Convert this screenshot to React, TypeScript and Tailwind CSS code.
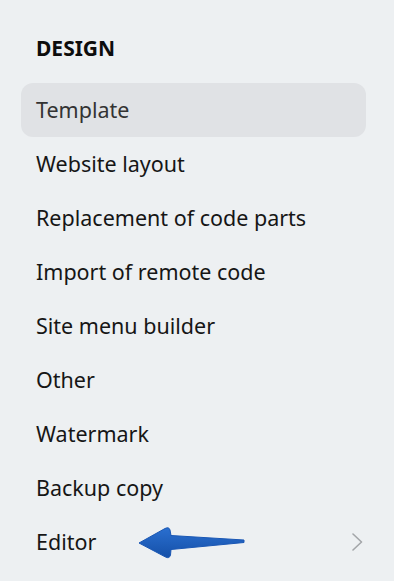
const items = [
  "Template",
  "Website layout",
  "Replacement of code parts",
  "Import of remote code",
  "Site menu builder",
  "Other",
  "Watermark",
  "Backup copy",
  "Editor",
]

function Arrow() {
  return (
    <svg width="112" height="36" viewBox="134 522 112 36" className="shrink-0">
      <defs>
        <linearGradient id="arw" x1="0" y1="0" x2="0" y2="1">
          <stop offset="0" stopColor="#2a6fd0" />
          <stop offset="1" stopColor="#1550a8" />
        </linearGradient>
      </defs>
      <path
        d="M139 540 L165 525.5 Q169 523.5 170 527 L171 532.5 L244 537 L244 539.5 L171 546.5 L170.5 552 Q169.5 556 165.5 554 Z"
        fill="url(#arw)"
        stroke="#1a57b4"
        strokeWidth="1"
        strokeLinejoin="round"
      />
    </svg>
  )
}

function Chevron() {
  return (
    <svg width="12" height="18" viewBox="0 0 12 18" className="ml-auto mr-[-12px] shrink-0">
      <polyline points="2,1 10.5,9 2,17" fill="none" stroke="#a3a6a9" strokeWidth="1.6" strokeLinecap="round" strokeLinejoin="round" />
    </svg>
  )
}

export default function App() {
  return (
    <div
      className="w-[394px] h-[581px] bg-[#edf0f2] overflow-hidden"
      style={{ fontFamily: '"Noto Sans", "Open Sans", sans-serif' }}
    >
      <div className="pt-[35px] pl-[21px] pr-[28px]">
        <div className="px-[15px] text-[21px] leading-[26px] font-bold text-[#0d0d0d]">DESIGN</div>
        <div className="mt-[22px] flex flex-col">
          {items.map((item, i) => (
            <div
              key={item}
              className={
                "h-[54px] flex items-center px-[15px] rounded-[12px] text-[21.5px] " +
                (i === 0 ? "bg-[#e0e2e5] text-[#333]" : "text-[#161616]")
              }
            >
              <span>{item}</span>
              {item === "Editor" && (
                <>
                  <div className="ml-[38px] mt-[1px] flex">
                    <Arrow />
                  </div>
                  <Chevron />
                </>
              )}
            </div>
          ))}
        </div>
      </div>
    </div>
  )
}
